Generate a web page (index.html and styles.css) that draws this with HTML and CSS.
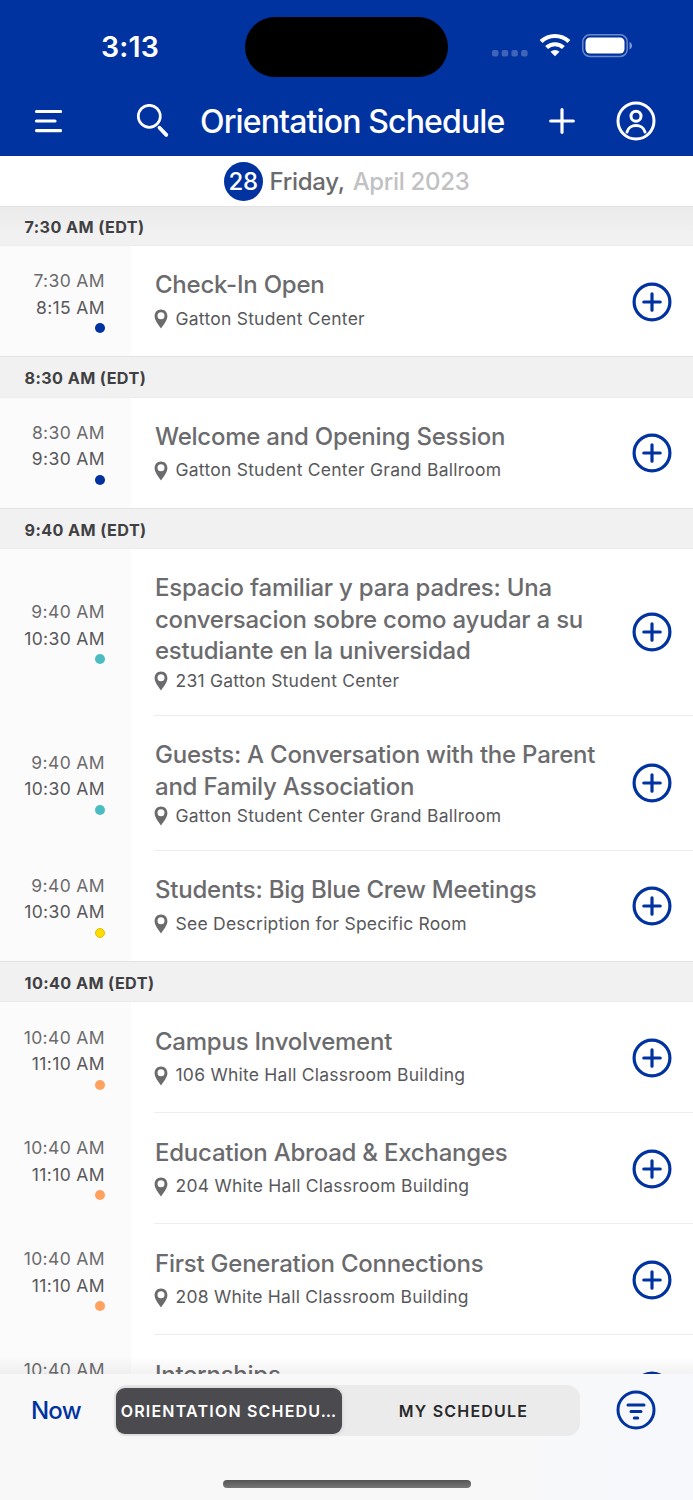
FILE: index.html
```html
<!DOCTYPE html>
<html lang="en">
    <head>
        <meta charset="utf-8">
        <title>Orientation Schedule</title>
        <link rel="stylesheet" href="styles.css">
    </head>
    <body>
        <!-- shared icons -->
        <svg class="sprite">
            <symbol id="plus" viewBox="0 0 40 40">
                <circle cx="20" cy="20" r="17.900" fill="none" stroke="#0032a0" stroke-width="3.200"/>
                <path d="M20 11.800v16.400M11.800 20h16.400" stroke="#0032a0" stroke-width="3.200" stroke-linecap="round"/>
            </symbol>
            <symbol id="pin" viewBox="0 0 14 20">
                <path fill="#6b6b6e" fill-rule="evenodd" d="M7 .5C3.300.5.6 3.300.6 7c0 4.400 3.800 8.600 6.400 12.400C9.600 15.600 13.400 11.400 13.400 7 13.400 3.300 10.700.5 7 .5zM7 3.200a3.500 3.500 0 1 1 0 7A3.500 3.500 0 0 1 7 3.200z"/>
            </symbol>
        </svg>
        <div class="app">
            <header class="top">
                <div class="status">
                    <div class="clock">3:13</div>
                    <div class="island"></div>
                    <div class="signals">
                        <svg class="dots" width="36" height="8" viewBox="0 0 36 8" fill="#fff" fill-opacity=".25">
                            <rect x="0" y="1" width="6.500" height="6.500" rx="2"/>
                            <rect x="9.700" y="1" width="6.500" height="6.500" rx="2"/>
                            <rect x="19.400" y="1" width="6.500" height="6.500" rx="2"/>
                            <rect x="29.100" y="1" width="6.500" height="6.500" rx="2"/>
                        </svg>
                        <svg class="wifi" width="32" height="24" viewBox="0 0 32 24">
                            <path d="M16 23.300l-4.500-4.600a6.600 6.600 0 0 1 9 0z" fill="#fff"/>
                            <path d="M7.600 14.600a12.200 12.200 0 0 1 16.800 0M2.100 8.600a20 20 0 0 1 27.800 0" fill="none" stroke="#fff" stroke-width="4.200"/>
                        </svg>
                        <svg class="battery" width="51" height="24" viewBox="0 0 51 24">
                            <rect x=".8" y=".8" width="44.400" height="21.600" rx="7" fill="none" stroke="#fff" stroke-opacity=".42" stroke-width="1.500"/>
                            <rect x="3.500" y="3.500" width="39" height="16" rx="4.500" fill="#fff"/>
                            <path d="M47.500 8v7.500c1.600-.6 2.500-2 2.500-3.700s-.9-3.200-2.500-3.800z" fill="#fff" fill-opacity=".5"/>
                        </svg>
                    </div>
                </div>
                <nav class="nav">
                    <svg class="menu" width="28" height="26" viewBox="0 0 28 26" stroke="#fff" stroke-width="3.200" stroke-linecap="round">
                        <path d="M2.500 3.500h24M2.500 13h18.500M2.500 22.600h24"/>
                    </svg>
                    <!-- the handle is separate from the lens -->
                    <svg class="search" width="34" height="34" viewBox="0 0 34 34" fill="none" stroke="#fff">
                        <circle cx="13.300" cy="12.300" r="11" stroke-width="2.700"/>
                        <path d="M23.500 23.700l6.800 7.200" stroke-width="3.800" stroke-linecap="round"/>
                    </svg>
                    <h1 class="title">Orientation Schedule</h1>
                    <svg class="add" width="26" height="26" viewBox="0 0 26 26" stroke="#fff" stroke-width="3.200" stroke-linecap="round">
                        <path d="M13 1.700v22.600M1.700 13h22.600"/>
                    </svg>
                    <svg class="user" width="40" height="40" viewBox="0 0 40 40" fill="none" stroke="#fff" stroke-width="3" stroke-linecap="round">
                        <circle cx="20" cy="20" r="18"/>
                        <circle cx="20" cy="15.200" r="5"/>
                        <path d="M11 31c2-8.600 16-8.600 18 0"/>
                    </svg>
                </nav>
            </header>
            <div class="date">
                <span class="day">28</span>
                <span class="weekday">Friday,</span>
                <span class="month">April 2023</span>
            </div>
            <main class="list">
                <h2 class="hour first">7:30 AM (EDT)</h2>
                <div class="event">
                    <div class="time"><span>7:30 AM</span><span class="end">8:15 AM</span><i class="dot blue"></i></div>
                    <div class="info">
                        <div class="text"><h3 class="name">Check-In Open</h3><p class="place"><svg class="pin"><use href="#pin"/></svg>Gatton Student Center</p></div>
                        <svg class="plus"><use href="#plus"/></svg>
                    </div>
                </div>
                <h2 class="hour">8:30 AM (EDT)</h2>
                <div class="event">
                    <div class="time"><span>8:30 AM</span><span class="end">9:30 AM</span><i class="dot blue"></i></div>
                    <div class="info">
                        <div class="text"><h3 class="name">Welcome and Opening Session</h3><p class="place"><svg class="pin"><use href="#pin"/></svg>Gatton Student Center Grand Ballroom</p></div>
                        <svg class="plus"><use href="#plus"/></svg>
                    </div>
                </div>
                <h2 class="hour">9:40 AM (EDT)</h2>
                <div class="event">
                    <div class="time"><span>9:40 AM</span><span class="end">10:30 AM</span><i class="dot teal"></i></div>
                    <div class="info">
                        <div class="text"><h3 class="name">Espacio familiar y para padres: Una<br>conversacion sobre como ayudar a su<br>estudiante en la universidad</h3><p class="place"><svg class="pin"><use href="#pin"/></svg>231 Gatton Student Center</p></div>
                        <svg class="plus"><use href="#plus"/></svg>
                    </div>
                </div>
                <div class="event">
                    <div class="time"><span>9:40 AM</span><span class="end">10:30 AM</span><i class="dot teal"></i></div>
                    <div class="info">
                        <div class="text"><h3 class="name">Guests: A Conversation with the Parent<br>and Family Association</h3><p class="place"><svg class="pin"><use href="#pin"/></svg>Gatton Student Center Grand Ballroom</p></div>
                        <svg class="plus"><use href="#plus"/></svg>
                    </div>
                </div>
                <div class="event">
                    <div class="time"><span>9:40 AM</span><span class="end">10:30 AM</span><i class="dot yellow"></i></div>
                    <div class="info">
                        <div class="text"><h3 class="name">Students: Big Blue Crew Meetings</h3><p class="place"><svg class="pin"><use href="#pin"/></svg>See Description for Specific Room</p></div>
                        <svg class="plus"><use href="#plus"/></svg>
                    </div>
                </div>
                <h2 class="hour">10:40 AM (EDT)</h2>
                <div class="event">
                    <div class="time"><span>10:40 AM</span><span class="end">11:10 AM</span><i class="dot orange"></i></div>
                    <div class="info">
                        <div class="text"><h3 class="name">Campus Involvement</h3><p class="place"><svg class="pin"><use href="#pin"/></svg>106 White Hall Classroom Building</p></div>
                        <svg class="plus"><use href="#plus"/></svg>
                    </div>
                </div>
                <div class="event">
                    <div class="time"><span>10:40 AM</span><span class="end">11:10 AM</span><i class="dot orange"></i></div>
                    <div class="info">
                        <div class="text"><h3 class="name">Education Abroad &amp; Exchanges</h3><p class="place"><svg class="pin"><use href="#pin"/></svg>204 White Hall Classroom Building</p></div>
                        <svg class="plus"><use href="#plus"/></svg>
                    </div>
                </div>
                <div class="event">
                    <div class="time"><span>10:40 AM</span><span class="end">11:10 AM</span><i class="dot orange"></i></div>
                    <div class="info">
                        <div class="text"><h3 class="name">First Generation Connections</h3><p class="place"><svg class="pin"><use href="#pin"/></svg>208 White Hall Classroom Building</p></div>
                        <svg class="plus"><use href="#plus"/></svg>
                    </div>
                </div>
                <div class="event">
                    <div class="time"><span>10:40 AM</span><span class="end"></span><i class="dot"></i></div>
                    <div class="info">
                        <div class="text"><h3 class="name">Internships</h3></div>
                        <svg class="plus"><use href="#plus"/></svg>
                    </div>
                </div>
            </main>
            <footer class="bottom">
                <div class="tools">
                    <span class="now">Now</span>
                    <div class="tabs">
                        <span class="tab active">ORIENTATION SCHEDU…</span>
                        <span class="tab">MY SCHEDULE</span>
                    </div>
                    <svg class="filter" width="40" height="40" viewBox="0 0 40 40" fill="none" stroke="#0032a0" stroke-width="3" stroke-linecap="round">
                        <circle cx="20" cy="20" r="18"/>
                        <path d="M12 15h16M15 21.500h10M18.300 28h3.400"/>
                    </svg>
                </div>
                <div class="home"></div>
            </footer>
        </div>
    </body>
</html>
```
FILE: styles.css
```css
body {
    margin: 0;
    font-family: Inter, "Liberation Sans", sans-serif;
    background-color: #ffffff;
}
h1, h2, h3, p {
    margin: 0;
}
svg {
    flex: none;
}
.sprite {
    display: none;
}
.app {
    display: flex;
    flex-direction: column;
    width: 693px;
    height: 1500px;
    overflow: hidden;
}

/* header */
.top {
    flex: none;
    height: 156px;
    background-color: #0032a0;
    color: #ffffff;
}
.status {
    display: grid;
    grid-template-columns: 245px 203px 245px;
    height: 86px;
}
.clock {
    padding: 30px 0 0 101px;
    font-size: 28.5px;
    font-weight: 600;
    line-height: 34px;
    letter-spacing: 0.2px;
}
.island {
    height: 60px;
    margin-top: 17px;
    border-radius: 30px;
    background-color: #000000;
}
.signals {
    display: flex;
    align-items: flex-start;
    padding: 34px 0 0 44px;
}
.dots {
    margin-top: 15px;
}
.wifi {
    margin-left: 10.5px;
    margin-top: -1px;
}
.battery {
    margin-left: 11px;
}
.nav {
    display: flex;
    align-items: center;
    height: 70px;
    padding: 0 37px 0 34px;
}
.search {
    margin-left: 74px;
}
.title {
    width: 306px;
    margin-left: 30px;
    font-size: 32px;
    font-weight: 500;
    letter-spacing: -0.87px;
    white-space: nowrap;
}
.add {
    margin-left: 43px;
}
.user {
    margin-left: 41px;
}

/* date */
.date {
    display: flex;
    flex: none;
    align-items: center;
    justify-content: center;
    height: 50px;
    padding-top: 1px;
    box-sizing: border-box;
    font-size: 24px;
    font-weight: 500;
    letter-spacing: -0.33px;
    color: #6b6b6e;
}
.day {
    width: 39px;
    height: 39px;
    border-radius: 50%;
    background-color: #0032a0;
    color: #ffffff;
    line-height: 39px;
    text-align: center;
}
.weekday {
    margin: 0 8px 0 7px;
}
.month {
    color: #c1c1c3;
}

/* schedule list */
.list {
    flex: 1;
    min-height: 0;
    overflow: hidden;
    position: relative;
}
.list::after {
    content: "";
    position: absolute;
    left: 0;
    right: 0;
    bottom: 0;
    height: 18px;
    background: linear-gradient(rgba(0,0,0,0), rgba(0,0,0,0.05));
}
.hour {
    box-sizing: border-box;
    height: 41.5px;
    padding-left: 24.5px;
    border-top: 1px solid #e2e2e3;
    border-bottom: 1px solid #ececec;
    background-color: #f1f1f1;
    color: #404043;
    font-size: 16.2px;
    font-weight: 700;
    line-height: 42px;
    letter-spacing: 0.4px;
}
.hour.first {
    height: 40px;
    line-height: 40px;
    background: linear-gradient(#ebebeb, #f1f1f1 70%);
}
.event {
    display: flex;
    min-height: 110px;
}
.event + .event {
    min-height: 111px;
}
.time {
    display: flex;
    flex-direction: column;
    align-items: flex-end;
    justify-content: center;
    box-sizing: border-box;
    width: 130.5px;
    padding: 2px 25.5px 0 0;
    background-color: #fbfbfb;
    color: #6b6b6e;
    font-size: 17.5px;
    line-height: 26.5px;
    letter-spacing: 0.37px;
}
.time span {
    min-height: 26.5px;
}
.time .end {
    color: #58585b;
}
.dot {
    width: 10px;
    height: 10px;
    margin: 2px 0 2.5px;
    border-radius: 50%;
}
.blue {
    background-color: #0032a0;
}
.teal {
    background-color: #4bbcc0;
}
.yellow {
    box-sizing: border-box;
    border: 1.5px solid #dcc000;
    background-color: #ffdc00;
}
.orange {
    background-color: #ffa260;
}
.info {
    display: flex;
    flex: 1;
    align-items: center;
    margin-left: 23px;
    padding-right: 21px;
}
.event + .event .info {
    border-top: 1px solid #ededed;
}
.text {
    flex: 1;
    align-self: flex-start;
    padding: 23.3px 0 20.45px 1.5px;
}
.name {
    min-height: 35.5px;
    color: #6b6b6e;
    font-size: 24px;
    font-weight: 500;
    line-height: 31.5px;
    letter-spacing: -0.23px;
    white-space: nowrap;
}
.place {
    display: flex;
    align-items: center;
    padding-top: 1px;
    color: #58585b;
    font-size: 17.5px;
    line-height: 26.5px;
    letter-spacing: 0.24px;
    white-space: nowrap;
}
.pin {
    width: 14px;
    height: 20px;
    margin: 0 7.5px 0 -1px;
}
.plus {
    width: 40px;
    height: 40px;
    margin: 1px 0 0 -20px;
}

/* bottom bar */
.bottom {
    flex: none;
    height: 126px;
    background: linear-gradient(100deg, #f8f8f8 70%, #f6f8fc);
}
.tools {
    display: flex;
    align-items: center;
    padding: 11px 37px 0 31px;
}
.now {
    width: 83px;
    margin-top: -1px;
    color: #0032a0;
    font-size: 24px;
    font-weight: 500;
    letter-spacing: -0.8px;
}
.tabs {
    display: grid;
    grid-template-columns: 226px 1fr;
    box-sizing: border-box;
    width: 466px;
    height: 51px;
    padding: 3px 2px;
    border-radius: 13px;
    background-color: #ebebeb;
}
.tab {
    padding-left: 7px;
    color: #28282a;
    font-size: 16px;
    font-weight: 600;
    line-height: 46px;
    letter-spacing: 1.2px;
    text-align: center;
    white-space: nowrap;
}
.tab.active {
    padding-left: 0;
    border-radius: 9px;
    background-color: #4b4b4f;
    color: #ffffff;
    box-shadow: 0 0 4px rgba(0,0,0,0.15);
}
.filter {
    margin: -1px 0 0 36px;
}
.home {
    width: 248px;
    height: 8px;
    margin: 44px auto 0;
    border-radius: 4px;
    background: linear-gradient(#555555, #777777);
}
```
